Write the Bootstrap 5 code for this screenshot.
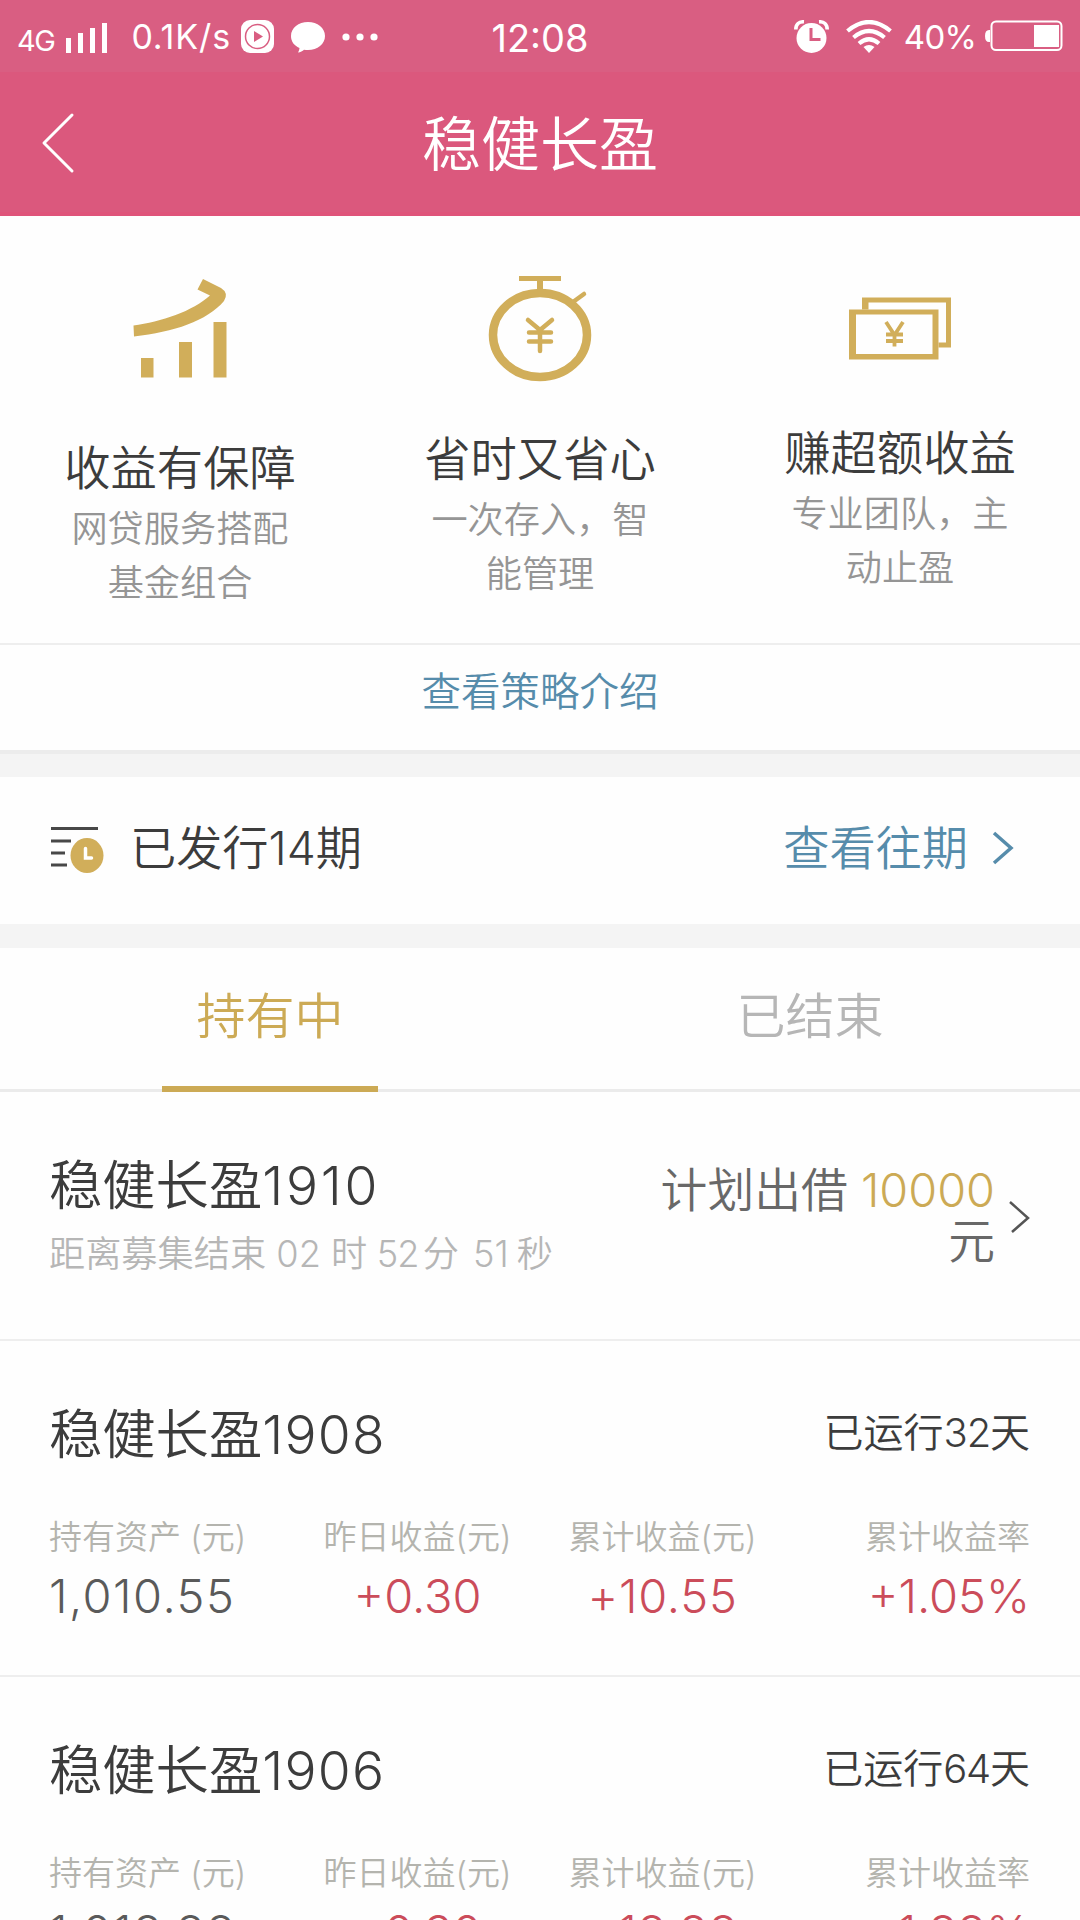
<!DOCTYPE html>
<html lang="zh-CN">
<head>
<meta charset="utf-8">
<meta name="viewport" content="width=device-width, initial-scale=1">
<title>稳健长盈</title>
<link href="https://cdn.jsdelivr.net/npm/bootstrap@5.3.0/dist/css/bootstrap.min.css" rel="stylesheet">
<script src="https://cdn.jsdelivr.net/npm/bootstrap@5.3.0/dist/js/bootstrap.bundle.min.js"></script>
<style>
  body { font-family: Inter, "Noto Sans CJK SC", sans-serif; font-weight: 350; color: #3c3c3c; background: #fefefe; line-height: 1; height: 1920px; overflow: hidden; }
  svg { display: block; flex: none; }
  a { text-decoration: none; }
  .status-bar { height: 72px; background: #d95e82; padding: 0 17px; display: grid; grid-template-columns: 1fr auto 1fr; font-weight: 400; }
  .status-bar > div { height: 60px; }
  .net { font-size: 29px; padding-top: 21px; letter-spacing: -1.5px; }
  .speed { font-size: 34px; width: 101px; letter-spacing: .9px; margin-left: 23px; padding-top: 14px; white-space: nowrap; }
  .clock-time { font-size: 38px; padding-top: 19px; }
  .battery-text { font-size: 33px; letter-spacing: -.8px; padding-top: 15px; }
  .title-bar { height: 144px; background: #db587d; border-bottom: 4px solid #df547a; }
  .title-bar h1 { font-size: 59px; font-weight: 350; line-height: 1; padding-top: 4px; }
  .back { width: 120px; padding: 2px 0 0 39px; }
  .features { height: 427px; padding-top: 48px; }
  .feature-art { height: 110px; }
  .feature h2 { font-size: 46.3px; font-weight: 350; line-height: 66px; margin: 0; }
  .feature p { font-size: 36.2px; line-height: 54px; color: #959595; margin: 1px auto 0; width: 220px; }
  .f1 h2 { margin-top: 61px } .f2 h2 { margin-top: 52px } .f3 h2 { margin-top: 46px }
  .hair { border-bottom: 2px solid #eee; }
  .blue { color: #568cab !important; }
  .gold { color: #ccaa55 !important; }
  .strategy { height: 105px; font-size: 39.5px; padding-bottom: 10px; }
  .gap-one { height: 27px; background: #f4f4f4; border-top: 4px solid #ececec; }
  .gap-two { height: 24px; background: #f4f4f4; }
  .issued { height: 147px; font-size: 46.2px; padding: 0 66px 4px 50px; }
  .tabs { height: 144px; border-bottom: 3px solid #ebebeb; font-size: 49px; }
  .tabs .nav-link { color: #b6b6b6; border-radius: 0; padding: 0 0 7px; height: 144px; font-weight: 350; }
  .tabs .nav-link.active { position: relative; }
  .tabs .nav-link.active::after { content: ""; position: absolute; left: 162px; width: 216px; height: 6px; bottom: 0; background: #ccaa55; }
  .plan { padding: 0 50px 0 49px; }
  .plan h3 { font-size: 53.3px; font-weight: 350; line-height: 64px; margin: 0; }
  .plan-open { height: 249px; padding-top: 62px; }
  .countdown { font-size: 36.2px; line-height: 48px; color: #b6b6b6; margin-top: 12px; white-space: nowrap; }
  .countdown i { font-style: normal; letter-spacing: -.8px; }
  .amount { font-size: 46.8px; line-height: 51px; color: #686868; text-align: right; width: 350px; padding-top: 11px; }
  .plan-run { height: 336px; padding-top: 62px; }
  .days { font-size: 40px; line-height: 60px; }
  .stats { margin-top: 50px; }
  .stats dt { font-size: 33px; line-height: 40px; color: #b4b4ae; font-weight: 350; white-space: nowrap; }
  .stats dd { font-size: 47px; line-height: 60px; margin: 9px 0 0; color: #cb4c5a; white-space: nowrap; font-weight: 300; }
  .stats .own { width: 235px; } .stats .own dd { color: #5a5a5a; letter-spacing: 1.5px; }
  .stats .day { width: 267px; } .stats .sum { width: 223px; } .stats .rate { flex: 1; text-align: right; }
  .stats .sum dd { letter-spacing: .8px; }
</style>
</head>
<body>
<header class="text-white">
  <div class="status-bar">
    <div class="d-flex align-items-center">
      <span class="net">4G</span>
      <svg width="42" height="30" viewBox="0 0 42 30" style="margin:15px 0 0 12px" fill="#fff"><path d="M0 15h5v15H0zM12 10h5v20h-5zM24 5h5v25h-5zM36 0h5v30h-5z"/></svg>
      <span class="speed">0.1K/s</span>
      <svg width="33" height="33" viewBox="0 0 33 33" style="margin:12px 0 0 9px"><rect width="33" height="33" rx="9" fill="#fff"/><circle cx="16.500" cy="16.500" r="12" fill="none" stroke="#d95e82" stroke-width="1.500"/><path d="M13 11v11l9-5.500z" fill="#d95e82"/></svg>
      <svg width="34" height="31" viewBox="0 0 34 31" style="margin:14px 0 0 17px" fill="#fff"><path d="M17 0C7.500 0 0 6 0 14c0 5.500 3 9.500 8.500 12-.2 2-.7 3-1.500 4.500 2.500-.2 4.500-1.300 6-2.700 1.300.2 2.600.2 4 .2 9.500 0 17-6 17-14S26.500 0 17 0z"/></svg>
      <svg width="36" height="8" viewBox="0 0 36 8" style="margin:13px 0 0 17px" fill="#fff"><circle cx="4" cy="4" r="3.600"/><circle cx="18" cy="4" r="3.600"/><circle cx="32" cy="4" r="3.600"/></svg>
    </div>
    <div class="clock-time">12:08</div>
    <div class="d-flex align-items-center justify-content-end">
      <svg width="35" height="33" viewBox="0 0 35 33" style="margin:12px 17px 0 0"><circle cx="17.500" cy="18" r="15" fill="#fff"/><path d="M1.800 9.500C1.800 4 5 1.500 10 1.800M33.200 9.500C33.200 4 30 1.500 25 1.800" fill="none" stroke="#fff" stroke-width="3.600"/><path d="M17 8v11.500h9.500" fill="none" stroke="#d95e82" stroke-width="3"/></svg>
      <svg width="46" height="33" viewBox="0 0 46 33" style="margin:12px 12px 0 0" fill="none" stroke="#fff" stroke-width="4.200"><path d="M1.500 11Q23-7 44.500 11M7.500 17.500Q23 4.500 38.500 17.500M13 23.500Q23 15 33 23.500"/><path d="M23 33l-5.500-6q5.500-4 11 0z" fill="#fff" stroke="none"/></svg>
      <span class="battery-text text-nowrap">40%</span>
      <svg width="78" height="32" viewBox="0 0 78 32" style="margin:12px 0 0 9px"><path d="M5 10v12H4q-4 0-4-6t4-6z" fill="#fff"/><rect x="6.500" y="1.500" width="70" height="28.500" rx="4.500" fill="none" stroke="#fff" stroke-width="2"/><path d="M49 5h25v22H49z" fill="#fff"/></svg>
    </div>
  </div>
  <div class="title-bar d-flex align-items-center">
    <a class="back" href="#"><svg width="36" height="62" viewBox="0 0 36 62" fill="none" stroke="#fff" stroke-width="3" stroke-linecap="round" stroke-linejoin="round"><path d="M33 3L5 31l28 28"/></svg></a>
    <h1 class="flex-fill text-center m-0">稳健长盈</h1>
    <div class="back"></div>
  </div>
</header>
<main>
  <section class="features row g-0 text-center">
    <div class="feature col-4 f1">
      <div class="feature-art d-flex justify-content-center"><svg width="100" height="120" viewBox="130 264 100 120" fill="#d1ae5a"><path d="M141 358h12.500v19.500H141zM179 342h13v35.500h-13zM213.500 322h13v55.500h-13z"/><path d="M133.500 325.500C161 322 193 311 210 295.500L197.500 289.500 203 279l18 9q8 5 3 13C207 321 174 332 134 336.500z"/></svg></div>
      <h2>收益有保障</h2><p>网贷服务搭配基金组合</p>
    </div>
    <div class="feature col-4 f2">
      <div class="feature-art d-flex justify-content-center"><svg width="110" height="120" viewBox="485 264 110 120" fill="none" stroke="#d1ae5a" stroke-linecap="round"><ellipse cx="540" cy="335" rx="47" ry="42" stroke-width="8.500"/><path d="M519 278.500h42" stroke-width="5" stroke-linecap="butt"/><path d="M540 279v12" stroke-width="6" stroke-linecap="butt"/><path d="M573 302l11-8" stroke-width="4.500"/><path d="M528 320l12 10 12-10M529 332.500h22M529 341.500h22M540 330v21" stroke-width="4.500"/></svg></div>
      <h2>省时又省心</h2><p>一次存入，智能管理</p>
    </div>
    <div class="feature col-4 f3">
      <div class="feature-art d-flex justify-content-center"><svg width="104" height="120" viewBox="848 264 104 120" fill="#d1ae5a"><path fill-rule="evenodd" d="M849 309.500h89.500v50H849zM856 314.500v39.500h76.500v-39.500z"/><path d="M862 309.500v-12h89v50h-12.500v-5h7.500v-40h-77.500v7z"/><path d="M886 322l8.500 13 8.500-13M886 334.500h17M886 341h17M894.500 334v12.500" fill="none" stroke="#d1ae5a" stroke-width="3.800"/></svg></div>
      <h2>赚超额收益</h2><p>专业团队，主动止盈</p>
    </div>
  </section>
  <div class="hair"></div>
  <a class="strategy blue d-flex align-items-center justify-content-center" href="#">查看策略介绍</a>
  <div class="gap-one"></div>
  <section class="issued d-flex align-items-center">
    <svg width="54" height="50" viewBox="50 822 54 50"><path d="M51 826.500h47M51 839h20M51 851h14M51 863h16" stroke="#484848" stroke-width="3"/><ellipse cx="87" cy="853.500" rx="16.500" ry="17.500" fill="#d1ae5a"/><path d="M85.500 846.500v9.500h6" fill="none" stroke="#fff" stroke-width="3.500" stroke-linecap="round"/></svg>
    <span style="margin-left:26px">已发行14期</span>
    <a class="blue ms-auto d-flex align-items-center" href="#">查看往期<svg style="margin-left:24px" width="22" height="34" viewBox="0 0 22 34" fill="none" stroke="#568cab" stroke-width="3.500"><path d="M2 2l17 15L2 32"/></svg></a>
  </section>
  <div class="gap-two"></div>
  <nav class="tabs nav nav-justified flex-nowrap">
    <a class="nav-link active gold d-flex align-items-center justify-content-center" href="#">持有中</a>
    <a class="nav-link d-flex align-items-center justify-content-center" href="#">已结束</a>
  </nav>
  <section class="plan plan-open hair d-flex">
    <div><h3>稳健长盈<span style="letter-spacing:2.8px">1910</span></h3><div class="countdown">距离募集结束 02 <i>时</i> <i>52</i><span class="ms-1">分</span> <span class="ms-1">51</span><span class="ms-2">秒</span></div></div>
    <div class="amount ms-auto">计划出借 <span class="gold">10000</span><br>元</div>
    <svg style="margin:46px 0 0 13px" width="22" height="36" viewBox="0 0 22 36" fill="none" stroke="#555" stroke-width="2.500"><path d="M2 2l18 16L4 32"/></svg>
  </section>
  <section class="plan plan-run hair">
    <div class="d-flex justify-content-between"><h3>稳健长盈<span style="letter-spacing:1.3px">1908</span></h3><span class="days">已运行<span style="letter-spacing:-1.2px">32</span>天</span></div>
    <div class="stats d-flex">
      <dl class="own m-0"><dt>持有资产 (元)</dt><dd>1,010.55</dd></dl>
      <dl class="day m-0 text-center"><dt>昨日收益(元)</dt><dd>+0.30</dd></dl>
      <dl class="sum m-0 text-center"><dt>累计收益(元)</dt><dd>+10.55</dd></dl>
      <dl class="rate m-0"><dt>累计收益率</dt><dd>+1.05%</dd></dl>
    </div>
  </section>
  <section class="plan plan-run">
    <div class="d-flex justify-content-between"><h3>稳健长盈<span style="letter-spacing:1.3px">1906</span></h3><span class="days">已运行<span style="letter-spacing:-1.2px">64</span>天</span></div>
    <div class="stats d-flex">
      <dl class="own m-0"><dt>持有资产 (元)</dt><dd>1,018.88</dd></dl>
      <dl class="day m-0 text-center"><dt>昨日收益(元)</dt><dd>+0.30</dd></dl>
      <dl class="sum m-0 text-center"><dt>累计收益(元)</dt><dd>+18.88</dd></dl>
      <dl class="rate m-0"><dt>累计收益率</dt><dd>+1.88%</dd></dl>
    </div>
  </section>
</main>
</body>
</html>
